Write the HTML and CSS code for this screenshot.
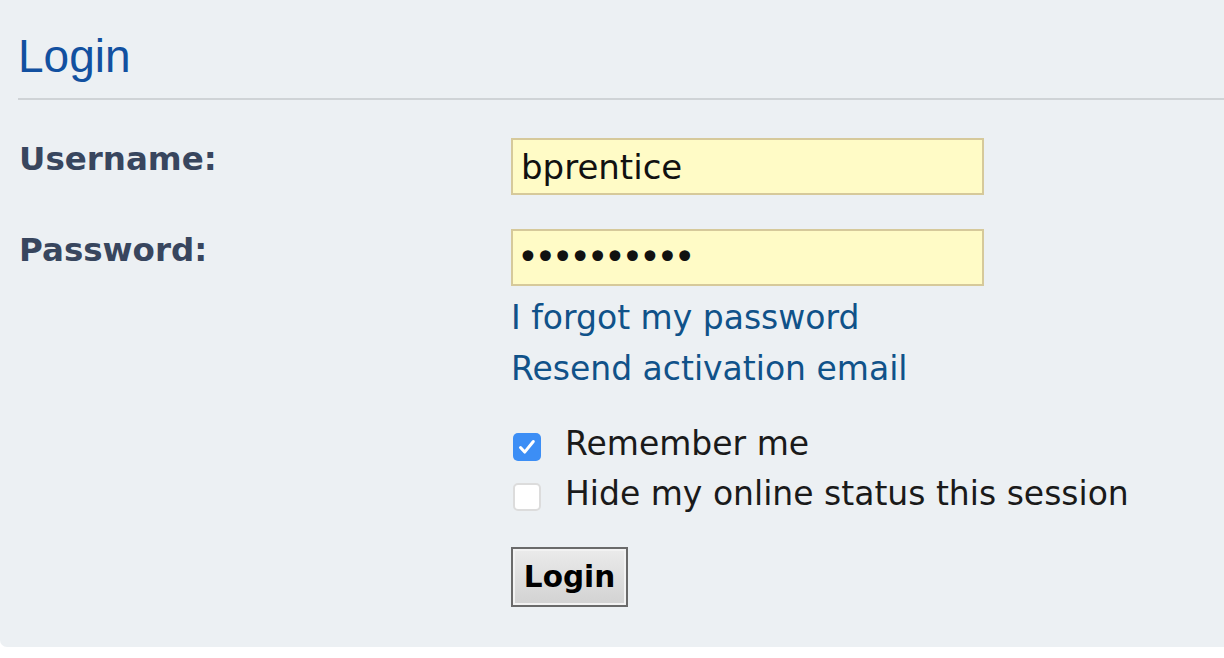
FILE: index.html
```html
<!DOCTYPE html>
<html lang="en">
<head>
<meta charset="utf-8">
<title>Login</title>
<link rel="stylesheet" href="styles.css">
</head>
<body>
<div class="panel">
  <h2 class="title">Login</h2>
  <form class="form">
    <div class="row">
      <label class="label" for="username">Username:</label>
      <div class="field">
        <input class="input" id="username" type="text" value="bprentice">
      </div>
    </div>
    <div class="row">
      <label class="label" for="password">Password:</label>
      <div class="field">
        <input class="input pw" id="password" type="password" value="xxxxxxxxxx">
        <div class="links">
          <a class="link" href="#">I forgot my password</a>
          <a class="link" href="#">Resend activation email</a>
        </div>
        <div class="checks">
          <label class="check">
            <span class="box on"><svg viewBox="0 0 28 28" width="28" height="28"><path d="M7.5 14.5l4.2 4.6 8.6-10.6" fill="none" stroke="#fff" stroke-width="3" stroke-linecap="round" stroke-linejoin="round"/></svg></span>
            <span class="check-text">Remember me</span>
          </label>
          <label class="check">
            <span class="box"></span>
            <span class="check-text">Hide my online status this session</span>
          </label>
        </div>
        <button class="btn" type="button">Login</button>
      </div>
    </div>
  </form>
</div>
</body>
</html>
```
FILE: styles.css
```css
html, body {
  margin: 0;
  padding: 0;
  background: #ffffff;
  overflow: hidden;
}
body {
  width: 1224px;
  height: 658px;
  font-family: "DejaVu Sans", Verdana, sans-serif;
}
.panel {
  background: #ecf0f3;
  width: 1240px;
  height: 647px;
  box-sizing: border-box;
  border-radius: 0 0 7px 7px;
  padding: 29px 0 0 18px;
}
.title {
  margin: 0;
  font-family: "Liberation Sans", Arial, sans-serif;
  font-weight: normal;
  font-size: 46px;
  line-height: 55px;
  color: #1250a0;
  padding: 0 0 14px 0;
  border-bottom: 2px solid #cfd3d6;
}
.form {
  padding-top: 38px;
}
.row {
  display: grid;
  grid-template-columns: 493px 1fr;
  margin-bottom: 34px;
}
.label {
  font-weight: bold;
  font-size: 32.5px;
  line-height: 38px;
  color: #38465e;
  padding: 2px 0 0 1px;
}
.field {
  display: flex;
  flex-direction: column;
  align-items: flex-start;
}
.input {
  box-sizing: border-box;
  width: 473px;
  height: 57px;
  margin: 0;
  border: 2px solid #d6c99a;
  background: #fffbc6;
  font-family: "DejaVu Sans", Verdana, sans-serif;
  font-size: 34px;
  color: #111;
  padding: 0 8px;
  outline: none;
}
.pw {
  font-size: 37px;
  letter-spacing: -4.4px;
  padding-left: 4px;
}
.links {
  display: flex;
  flex-direction: column;
  align-items: flex-start;
  margin-top: 6px;
}
.link {
  font-size: 33px;
  line-height: 51px;
  color: #105289;
  text-decoration: none;
}
.checks {
  margin-top: 25px;
  display: flex;
  flex-direction: column;
}
.check {
  display: flex;
  align-items: center;
  height: 50px;
  font-size: 33px;
  color: #1a1a1a;
}
.box {
  box-sizing: border-box;
  width: 28px;
  height: 28px;
  border-radius: 5px;
  margin: 5px 24px 0 2px;
  background: #ffffff;
  border: 2px solid #dcdcdc;
  flex: none;
  display: flex;
}
.box.on {
  background: #3c8ef5;
  border: none;
}
.check-text {
  line-height: 50px;
}
.btn {
  margin-top: 28px;
  box-sizing: border-box;
  width: 117px;
  height: 60px;
  border: 2px solid #6a6a6a;
  box-shadow: inset 0 0 0 2px #f2f2f2;
  background: linear-gradient(#ebebeb, #d2d2d2);
  font-family: "DejaVu Sans", Verdana, sans-serif;
  font-weight: bold;
  font-size: 29.5px;
  color: #000;
  padding: 0;
  border-radius: 0;
}
```
